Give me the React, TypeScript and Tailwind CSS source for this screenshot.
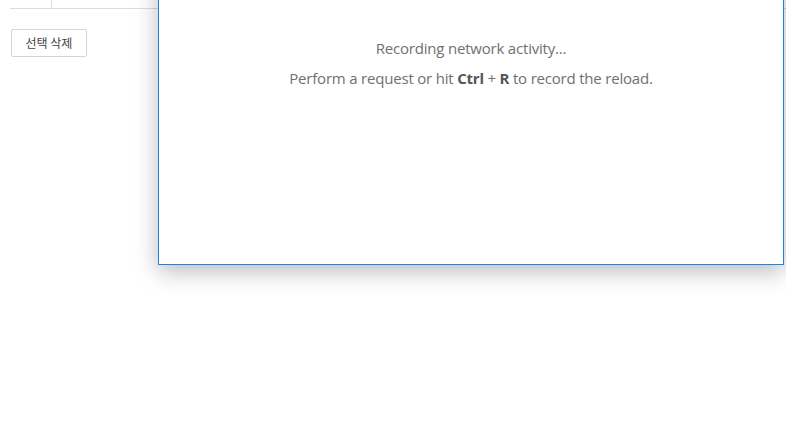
import React from 'react';

const Kbd: React.FC<{ children: React.ReactNode }> = ({ children }) => (
  <span className="font-bold text-[#555]">{children}</span>
);

export default function App() {
  return (
    <div className="relative w-[786px] h-[433px] bg-white overflow-hidden font-['Open_Sans',sans-serif]">
      {/* page behind the devtools window */}
      <div className="pl-[10px]">
        <div className="flex h-[9px] border-b border-[#dcdcdc]">
          <div className="w-[42px] border-r border-[#dcdcdc]" />
          <div className="flex-1" />
        </div>
      </div>
      <div className="pl-[11px] pt-[20px]">
        <button className="h-[28px] w-[76px] border border-[#d4d4d4] rounded-[2px] bg-white text-[12px] text-[#444] font-['Noto_Sans_CJK_KR',sans-serif]">
          선택 삭제
        </button>
      </div>

      {/* network panel window overlay */}
      <div className="absolute left-[158px] top-[-40px] w-[626px] h-[305px] bg-white border border-[#1a84e8] shadow-[0_6px_22px_rgba(0,0,0,0.28)]">
        <div className="flex flex-col items-center pt-[77px] text-[15px] text-[#707070] tracking-[-0.2px]">
          <div className="leading-[20px]">Recording network activity...</div>
          <div className="mt-[10px] leading-[20px]">
            Perform a request or hit <Kbd>Ctrl</Kbd> + <Kbd>R</Kbd> to record the reload.
          </div>
        </div>
      </div>
    </div>
  );
}
